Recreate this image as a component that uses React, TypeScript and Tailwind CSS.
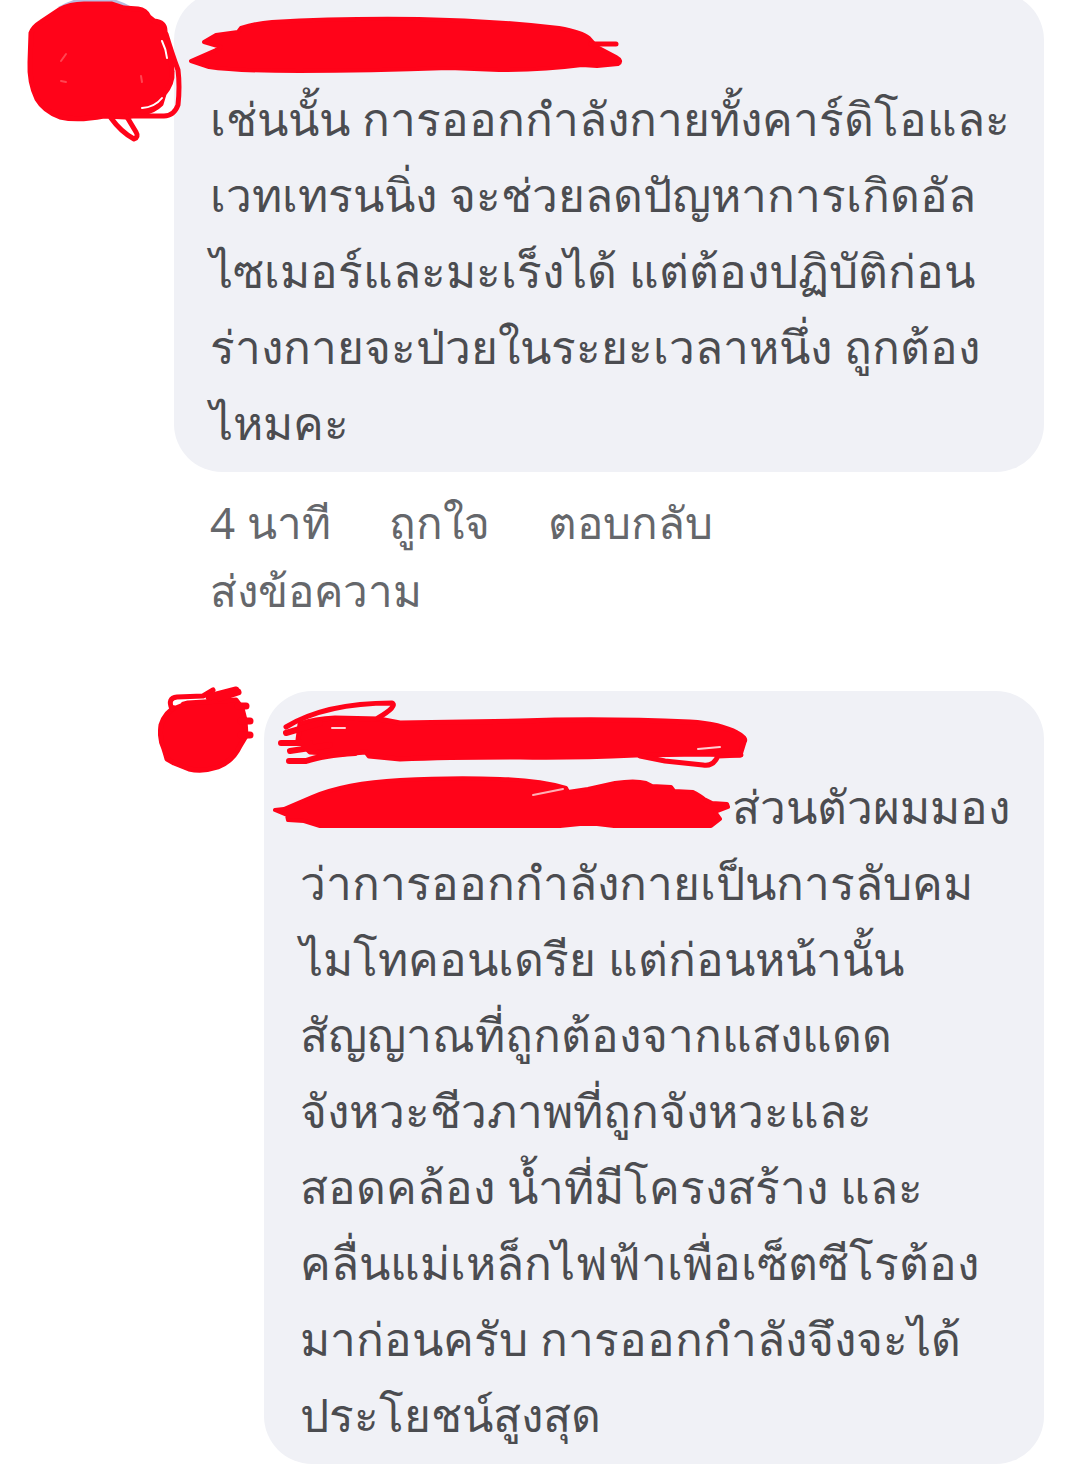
import { Fragment } from "react";
import type { ReactNode } from "react";

const questionLines = [
  "เช่นนั้น การออกกำลังกายทั้งคาร์ดิโอและ",
  "เวทเทรนนิ่ง จะช่วยลดปัญหาการเกิดอัล",
  "ไซเมอร์และมะเร็งได้ แต่ต้องปฏิบัติก่อน",
  "ร่างกายจะป่วยในระยะเวลาหนึ่ง ถูกต้อง",
  "ไหมคะ",
];

const replyLines = [
  "ส่วนตัวผมมอง",
  "ว่าการออกกำลังกายเป็นการลับคม",
  "ไมโทคอนเดรีย แต่ก่อนหน้านั้น",
  "สัญญาณที่ถูกต้องจากแสงแดด",
  "จังหวะชีวภาพที่ถูกจังหวะและ",
  "สอดคล้อง น้ำที่มีโครงสร้าง และ",
  "คลื่นแม่เหล็กไฟฟ้าเพื่อเซ็ตซีโรต้อง",
  "มาก่อนครับ การออกกำลังจึงจะได้",
  "ประโยชน์สูงสุด",
];

const actions = ["ถูกใจ", "ตอบกลับ", "ส่งข้อความ"];

const Lines = ({ lines }: { lines: string[] }) => (
  <>
    {lines.map((line, i) => (
      <Fragment key={line}>
        {i > 0 && <br />}
        {line}
      </Fragment>
    ))}
  </>
);

const Bubble = ({ children }: { children: ReactNode }) => (
  <div className="min-w-0 flex-1 rounded-[48px] bg-[#f0f1f6] px-9 pb-3 text-[46px] leading-[76px] text-[#4b4c50]">
    {children}
  </div>
);

const AvatarScribble = () => (
  <svg
    className="absolute top-0 left-0 h-[150px] w-[170px]"
    viewBox="20 0 170 150"
    fill="none"
    stroke="#ff0319"
    strokeWidth="5"
    strokeLinecap="round"
    strokeLinejoin="round"
    aria-hidden="true"
  >
    <path d="M58 7Q95 -14 132 7Z" fill="#b9bde0" stroke="none" />
    <path
      d="M31 33Q33 27 41 22L59 10Q70 4 84 4L112 4L124 8L138 9Q146 10 149 17L154 21Q165 22 165 31L165 38Q171 49 172 72Q173 83 164 94L161 104Q154 111 143 113L126 117L104 116Q78 121 60 117Q44 111 37 99Q29 82 30 62Z"
      fill="#ff0319"
    />
    <path d="M166 34Q172 54 178 70Q180 86 178 105Q174 116 164 116L130 116" />
    <path d="M111 118Q121 132 134 139Q139 137 136 132L127 117" />
    <path d="M162 41Q166 49 167 58M142 108Q155 107 162 98" stroke="#fff" strokeWidth="2" />
    <path d="M61 61L66 54M61 81L66 82M141 76L142 82" stroke="#ff4552" strokeWidth="2" />
  </svg>
);

const NameScribble = () => (
  <svg
    className="absolute top-[22px] -left-6 h-[64px] w-[440px]"
    viewBox="187 14 440 64"
    fill="none"
    stroke="#ff0319"
    strokeWidth="4"
    strokeLinecap="round"
    strokeLinejoin="round"
    aria-hidden="true"
  >
    <path
      d="M205 42L217 35L239 32L242 28Q258 23 273 22Q340 18 420 19Q490 20 560 28Q583 32 590 38L598 47L617 57Q624 61 619 64L598 66L583 65Q545 70 500 70L450 68Q370 71 300 71Q236 71 210 67L192 61L217 50L222 47Z"
      fill="#ff0319"
    />
    <path d="M592 44H617" strokeWidth="5" />
  </svg>
);

const ReplyAvatarScribble = () => (
  <svg
    className="absolute -top-2 left-0 h-[96px] w-[104px]"
    viewBox="158 683 104 96"
    fill="none"
    stroke="#ff0319"
    strokeWidth="5"
    strokeLinecap="round"
    strokeLinejoin="round"
    aria-hidden="true"
  >
    <path
      d="M177 706L188 703L204 702L236 700L242 708L245 720L246 736L240 746Q233 761 218 767Q203 772 189 769L174 763L167 759Q165 752 164 749Q159 739 161 725Q165 712 177 706Z"
      fill="#ff0319"
    />
    <path d="M172 709Q167 698 177 697L203 696L213 690" />
    <path d="M209 697L236 690L220 698L238 692" strokeWidth="7" />
    <path d="M238 706H246M241 721H250M241 735H250" strokeWidth="7" />
    <path d="M175 704L180 702" stroke="#fff" strokeWidth="3" />
  </svg>
);

const ReplyNameScribble = () => (
  <svg
    className="absolute top-1 -left-7 h-[80px] w-[480px]"
    viewBox="272 695 480 80"
    fill="none"
    stroke="#ff0319"
    strokeWidth="5"
    strokeLinecap="round"
    strokeLinejoin="round"
    aria-hidden="true"
  >
    <path
      d="M300 724Q315 719 335 718L379 719L400 723L520 721Q600 718 690 722Q721 724 737 733Q747 738 744 742L740 755L700 754L636 755Q570 758 520 757Q450 757 400 759L369 756L366 752L340 754L310 752L298 740Z"
      fill="#ff0319"
    />
    <path d="M286 727Q325 703 392 703Q398 706 378 718" />
    <path d="M286 733L320 723M281 743H310M290 751L330 745M289 761H306Q323 755 355 753" strokeWidth="6" />
    <path d="M640 756L665 761L703 765Q713 767 718 756L741 755" />
    <path d="M332 728H345M698 749L720 747" stroke="#ffd0d4" strokeWidth="2" />
  </svg>
);

const MentionScribble = () => (
  <svg
    className="absolute top-0.5 -left-8 h-[64px] w-[466px]"
    viewBox="268 770 466 64"
    fill="none"
    stroke="#ff0319"
    strokeWidth="4"
    strokeLinecap="round"
    strokeLinejoin="round"
    aria-hidden="true"
  >
    <path
      d="M275 810L284 809L312 797Q345 783 400 780Q455 777 500 779Q540 780 566 788L568 792L588 789L615 783Q635 780 646 783L652 786L671 787L674 791L693 792Q701 796 704 799L712 803L727 804L728 807L715 812L720 819L711 826H614L597 824H580L560 826H320L304 821L288 820L287 815Z"
      fill="#ff0319"
    />
    <path d="M533 795L563 789" stroke="#ffb0b6" strokeWidth="2" />
  </svg>
);

export default function App() {
  return (
    <main className="overflow-hidden bg-white font-['Noto_Sans',sans-serif]">
      <article className="flex pr-9 pl-5">
        <div className="relative w-[154px] shrink-0">
          <AvatarScribble />
        </div>
        <div className="min-w-0 flex-1">
          <div className="-mt-2 flex">
            <Bubble>
              <div className="relative h-[88px]">
                <NameScribble />
              </div>
              <p className="whitespace-nowrap">
                <Lines lines={questionLines} />
              </p>
            </Bubble>
          </div>
          <div className="flex flex-wrap gap-x-[58px] pt-4 pr-32 pl-9 text-[44px] leading-[68px] text-[#65676b]">
            <time>4 นาที</time>
            {actions.map((action) => (
              <button key={action} type="button">
                {action}
              </button>
            ))}
          </div>
        </div>
      </article>

      <article className="flex pt-[67px] pr-9 pl-[158px]">
        <div className="relative w-[106px] shrink-0">
          <ReplyAvatarScribble />
        </div>
        <Bubble>
          <div className="relative h-[77px]">
            <ReplyNameScribble />
          </div>
          <p className="relative whitespace-nowrap">
            <MentionScribble />
            <span className="inline-block w-[432px]" />
            <Lines lines={replyLines} />
          </p>
        </Bubble>
      </article>
    </main>
  );
}
